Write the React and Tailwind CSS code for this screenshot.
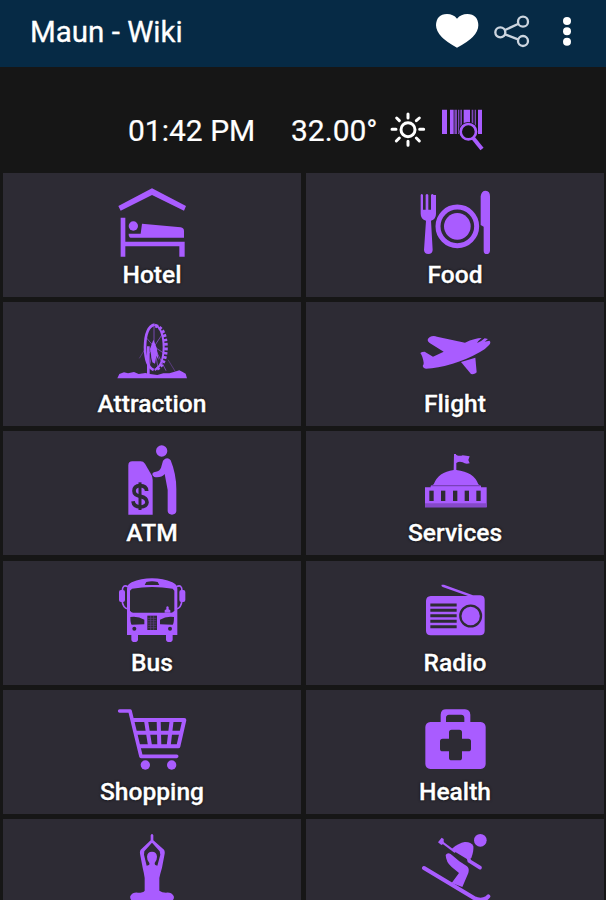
import React from "react";

const ACCENT = "#a95cff";
const TILE = "#2d2b34";

const Icon = ({ viewBox, children }) => (
  <svg viewBox={viewBox} className="w-[110px] h-[88px] shrink-0" fill={ACCENT}>
    {children}
  </svg>
);

const HotelIcon = () => (
  <Icon viewBox="-9 -6 330 264">
    <path d="M55 93 L156 40 L258 93 L252 107 L156 60 L62 107Z" />
    <path d="M62 128h14v72h178v45h-16v-31H76v31H62z" />
    <circle cx="100" cy="153" r="14" />
    <path d="M126 146 L242 157 Q252 159 252 168 V188 H92 Q86 187 86 176 H122z" />
  </Icon>
);

const FoodIcon = () => (
  <Icon viewBox="0 -6 330 264">
    <path d="M62 60q3-6 7 0v44h8V60q4-6 8 0v44h8V60q4-6 8 0l7 0v56q0 16-15 21l5 88q-1 12-13 12t-13-12l6-88q-16-5-16-21z" />
    <circle cx="172" cy="154" r="58" fill="none" stroke={ACCENT} strokeWidth="15" />
    <circle cx="172" cy="154" r="40" />
    <path d="M242 150V64q2-17 15-17 13 1 13 17v163q-1 10-10 10t-9-10v-72z" />
  </Icon>
);

const AttractionIcon = () => (
  <Icon viewBox="-9 -23 330 264">
    <path d="M52 206l6-13 14-5 12 3 18-4 14 6 20-3 14 3 22 3 18-5 18 0 16-5 14-4 10 5 9 5 4 14z" />
    <path d="M164 45q-28 6-29 68 1 58 26 68" fill="none" stroke={ACCENT} strokeWidth="8" />
    <path d="M164 45q26 10 27 68-1 56-27 68" fill="none" stroke={ACCENT} strokeWidth="6" />
    <path d="M166 48q31 8 32 65-1 55-32 67" fill="none" stroke={ACCENT} strokeWidth="11" strokeDasharray="8 5" />
    <g stroke={ACCENT} strokeWidth="3" fill="none">
      <path d="M162 111L142 194M162 111l36 72M162 111V50M162 111l28-42M162 111l30 20M162 111l12 62M162 111l-24-28M162 111l-22 28" opacity="0.6" />
      <path d="M134 120l-16 26M204 150l22 36" opacity="0.35" />
    </g>
    <path d="M141 110h8v86h-8zM150 118l10-28 10 24 6 38-7-14-4 24-8-4z" />
  </Icon>
);

const FlightIcon = () => (
  <Icon viewBox="0 -23 330 264">
    <path d="M83 92q0-8 12-12 8-2 16 1l84 18q30-14 50-14-10 8-14 15 14-5 23-14l10 2-10 8 14-3q6 3 0 12-10 12-28 22-40 23-82 35-46 14-80 15-8 0-10-8 4-6 3-10-3-20-10-29 4-4 13-4l25 15 32-15-42-26q-5-3-6-8z" />
    <path d="M183 157l43-13 4 44q-4 7-17 5z" />
  </Icon>
);

const AtmIcon = () => (
  <Icon viewBox="-9 -11 330 264">
    <path d="M85 92q0-12 12-12h25q8 0 13 7l20 35q3 6 3 14v104H85z" />
    <g fill="none" stroke={TILE} strokeWidth="11">
      <path d="M140 169q-1-16-20-16-18 1-18 16 0 12 19 16 20 4 20 18-1 13-20 14-20 0-22-17" />
      <path d="M120 143v83" strokeWidth="9" />
    </g>
    <circle cx="185" cy="49" r="17" />
    <path d="M189 78q13-14 23-1 18 44 17 92v61q-2 10-13 10t-13-10v-64l-9-48q-10 12-31 9-8-4-5-11 2-5 10-5 11-2 15-12z" />
  </Icon>
);

const ServicesIcon = () => (
  <Icon viewBox="0 -11 330 264">
    <path d="M162 58h6l0 2q10 6 20 2l21 3-4 11 4 10q-12 4-21-3-10-5-19 2v21q53 6 66 43l8 5v4h17v60H75v-60h17v-4l9-5q14-37 60-43z" />
    <path d="M75 206h185v12H75z" fill="#8548c9" />
    <path d="M94 153h147" stroke="#7941b8" strokeWidth="4" />
    <g fill={TILE}>
      <rect x="88" y="168" width="13" height="31" />
      <rect x="123" y="168" width="13" height="31" />
      <rect x="159" y="168" width="13" height="31" />
      <rect x="194" y="168" width="13" height="31" />
      <rect x="229" y="168" width="13" height="31" />
    </g>
  </Icon>
);

const BusIcon = () => (
  <Icon viewBox="-9 -13 330 264">
    <path d="M81 70q1-13 14-19 28-12 61-12t61 12q14 6 15 19v139h-14v14q-1 7-10 7t-10-7v-14h-84v14q-1 7-10 7t-10-7v-14H81z" />
    <path d="M96 70q60-10 122 0l5 6v59q-2 7-9 7H99q-7 0-9-7V76z" fill={TILE} />
    <path d="M139 50q17-5 34 0l5 9h-44z" fill={TILE} />
    <path d="M194 142v-7l5-3v-7q3-5 7 0v7l5 3v7z" />
    <g fill="none" stroke={ACCENT} strokeWidth="5">
      <path d="M84 64q-17-8-17 12M66 104q2 24 18 27M229 64q17-8 17 12M246 104q-2 24-17 27" />
    </g>
    <rect x="57" y="74" width="18" height="36" rx="6" />
    <rect x="238" y="74" width="18" height="36" rx="6" />
    <g fill={TILE}>
      <path d="M91 155q22-4 42 8v14l-38 1q-4-4-4-23zM222 155q-22-4-42 8v14l38 1q4-4 4-23z" />
      <rect x="142" y="151" width="29" height="43" />
      <circle cx="103" cy="190" r="6" />
      <circle cx="210" cy="190" r="6" />
    </g>
    <path d="M144 159h25M144 166h25M144 173h25M144 180h25M144 187h25M152 151v43M161 151v43" stroke={ACCENT} strokeWidth="2" opacity="0.4" />
  </Icon>
);

const RadioIcon = () => (
  <Icon viewBox="0 -13 330 264">
    <path d="M125 58l7 0 87 32h22q13 1 13 14v93q-1 13-14 13H92q-13 0-14-13v-91q1-13 14-14h112l-76-27q-6-3-3-7z" />
    <path d="M91 119h79M91 135h79M91 151h79M91 168h79M91 184h79" stroke={TILE} strokeWidth="9" />
    <circle cx="212" cy="152" r="31" fill="none" stroke={TILE} strokeWidth="7" />
  </Icon>
);

const ShoppingIcon = () => (
  <Icon viewBox="21 -16 330 264">
    <g fill="none" stroke={ACCENT} strokeLinecap="round" strokeLinejoin="round">
      <path d="M89 47h31l33 136h107" strokeWidth="11" />
      <path d="M131 74h152l-18 79H149" strokeWidth="12" />
      <path d="M138 112h134M168 75l12 76M206 75l2 76M245 75l-9 76" strokeWidth="12" />
    </g>
    <circle cx="166" cy="209" r="14" />
    <circle cx="245" cy="209" r="14" />
  </Icon>
);

const HealthIcon = () => (
  <Icon viewBox="0 -16 330 264">
    <path d="M122 80V58q1-16 16-16h57q15 1 16 16v22h31q14 1 15 15v111q-1 14-15 15H91q-14-1-15-15V95q1-14 15-15zm16 0h55V67q-1-9-9-9h-37q-9 1-9 9z" fillRule="evenodd" />
    <path d="M155 103h23q8 0 8 8v19h19q8 0 8 8v22q0 8-8 8h-19v19q0 8-8 8h-23q-8 0-8-8v-19h-19q-8 0-8-8v-22q0-8 8-8h19v-19q0-8 8-8z" fill={TILE} />
  </Icon>
);

const YogaIcon = () => (
  <Icon viewBox="21 372 330 264">
    <path d="M182 421q4-8 8 0v15l32 28q3 4 2 12l-8 42q-6 20-8 31v38q8 6 20 6 16-2 23 10 4 13-12 17H133q-15-4-12-17 7-12 23-10 16 0 20-6v-38q-2-15-6-31l-8-42q-1-8 2-12l30-28zm4 22l-23 26-1 10 8 33 7-2q2-3 1-6-7-7-7-19 1-15 15-15t15 15q0 12-7 19 0 4 2 6l6 2 9-33-2-10z" fillRule="evenodd" />
  </Icon>
);

const SkiIcon = () => (
  <Icon viewBox="0 372 330 264">
    <circle cx="241" cy="436" r="19" />
    <g fill="none" stroke={ACCENT} strokeLinecap="round" strokeLinejoin="round">
      <path d="M72 519L222 609q20 10 38 0l5-5" strokeWidth="12" />
      <path d="M124 440l40 30" strokeWidth="6" />
      <path d="M203 478l5 20 32 20" strokeWidth="11" />
    </g>
    <path d="M114 442l11-14 6 4v14l-7 4z" />
    <path d="M156 461q20-17 38-20 19-1 26 12 2 14-6 36l-12 4-46-28z" />
    <path d="M137 480q5-8 15-3l26 22 23 15q8 6 4 20l-18 42-32-12 22-30-22-18q-17-14-18-36z" />
    <path d="M142 466l60 40" stroke={TILE} strokeWidth="4" />
  </Icon>
);

const tiles = [
  { label: "Hotel", icon: HotelIcon },
  { label: "Food", icon: FoodIcon },
  { label: "Attraction", icon: AttractionIcon },
  { label: "Flight", icon: FlightIcon },
  { label: "ATM", icon: AtmIcon },
  { label: "Services", icon: ServicesIcon },
  { label: "Bus", icon: BusIcon },
  { label: "Radio", icon: RadioIcon },
  { label: "Shopping", icon: ShoppingIcon },
  { label: "Health", icon: HealthIcon },
  { label: "", icon: YogaIcon },
  { label: "", icon: SkiIcon },
];

const Tile = ({ label, icon: TileIcon }) => (
  <button className="flex flex-col items-center h-[124px] bg-[#2d2b34] overflow-hidden">
    <TileIcon />
    <span className="text-[24.6px] leading-[28px] font-medium text-white [-webkit-text-stroke:0.3px_#fff] [text-shadow:0_0_3px_#000]">
      {label}
    </span>
  </button>
);

const Header = () => (
  <header className="flex items-center h-[67px] pl-[30px] pr-[31px] bg-[#062a45]">
    <h1 className="flex-1 text-[29.5px] leading-[34px] -mt-[3px] [-webkit-text-stroke:0.3px_#fff]">Maun - Wiki</h1>
    <div className="flex items-center -mt-[5px]">
      <svg viewBox="396 36 132 114" className="w-[44px] h-[38px]" fill="#fff">
        <path d="M462 143q-62-32-63-67 1-33 33-34 19 0 30 14 12-14 31-14 32 1 33 34 0 35-64 67z" />
      </svg>
      <svg viewBox="567 36 120 108" className="w-[40px] h-[36px] ml-[13px]" fill="none" stroke="#ccd5df" strokeWidth="7">
        <circle cx="592" cy="94" r="15" />
        <circle cx="660" cy="62" r="15" />
        <circle cx="660" cy="120" r="15" />
        <path d="M606 87l39-18M606 100l39 15" />
      </svg>
      <svg viewBox="768 36 48 108" className="w-[16px] h-[36px] ml-[27px]" fill="#fff">
        <circle cx="792" cy="60" r="12" />
        <circle cx="792" cy="91" r="12" />
        <circle cx="792" cy="122" r="12" />
      </svg>
    </div>
  </header>
);

const StatusRow = () => (
  <div className="flex items-center h-[106px] pl-[128px] pt-[20px] text-[30px] leading-[36px] [-webkit-text-stroke:0.2px_#fff]">
    <span className="w-[163px] pt-[2px]">01:42 PM</span>
    <span className="w-[99px] pt-[2px]">32.00°</span>
    <svg viewBox="262 336 108 108" className="w-[36px] h-[36px] shrink-0" fill="none" stroke="#fff" strokeWidth="9">
      <circle cx="316" cy="389" r="21" />
      <path
        d="M316 342v12M316 424v12M268 388h12M351 388h12M282 354l8 8M341 414l9 9M350 354l-9 8M290 414l-9 9"
        strokeLinecap="round"
      />
    </svg>
    <svg viewBox="414 324 132 132" className="w-[44px] h-[44px] ml-[15px] shrink-0">
      <g fill={ACCENT}>
        <path d="M417 329h15v73h-15zM441 329h11v73h-11zM482 329h19v73h-19zM525 329h12v73h-12z" />
        <path d="M454 329h8v73h-8zM465 329h4v73h-4zM472 329h5v73h-5zM506 329h5v73h-5zM515 329h4v73h-4z" opacity="0.7" />
      </g>
      <circle cx="496" cy="395" r="29" fill="#161616" />
      <circle cx="496" cy="395" r="23" fill="none" stroke={ACCENT} strokeWidth="8" />
      <path d="M511 415l26 32" stroke={ACCENT} strokeWidth="12" />
    </svg>
  </div>
);

export default function App() {
  return (
    <div className="w-[606px] h-[900px] overflow-hidden bg-[#161616] text-white font-['Roboto',sans-serif]">
      <Header />
      <StatusRow />
      <main className="grid grid-cols-2 gap-x-[5px] gap-y-[5.2px] pl-[3px] pr-[2px]">
        {tiles.map((tile, i) => (
          <Tile key={i} {...tile} />
        ))}
      </main>
    </div>
  );
}
